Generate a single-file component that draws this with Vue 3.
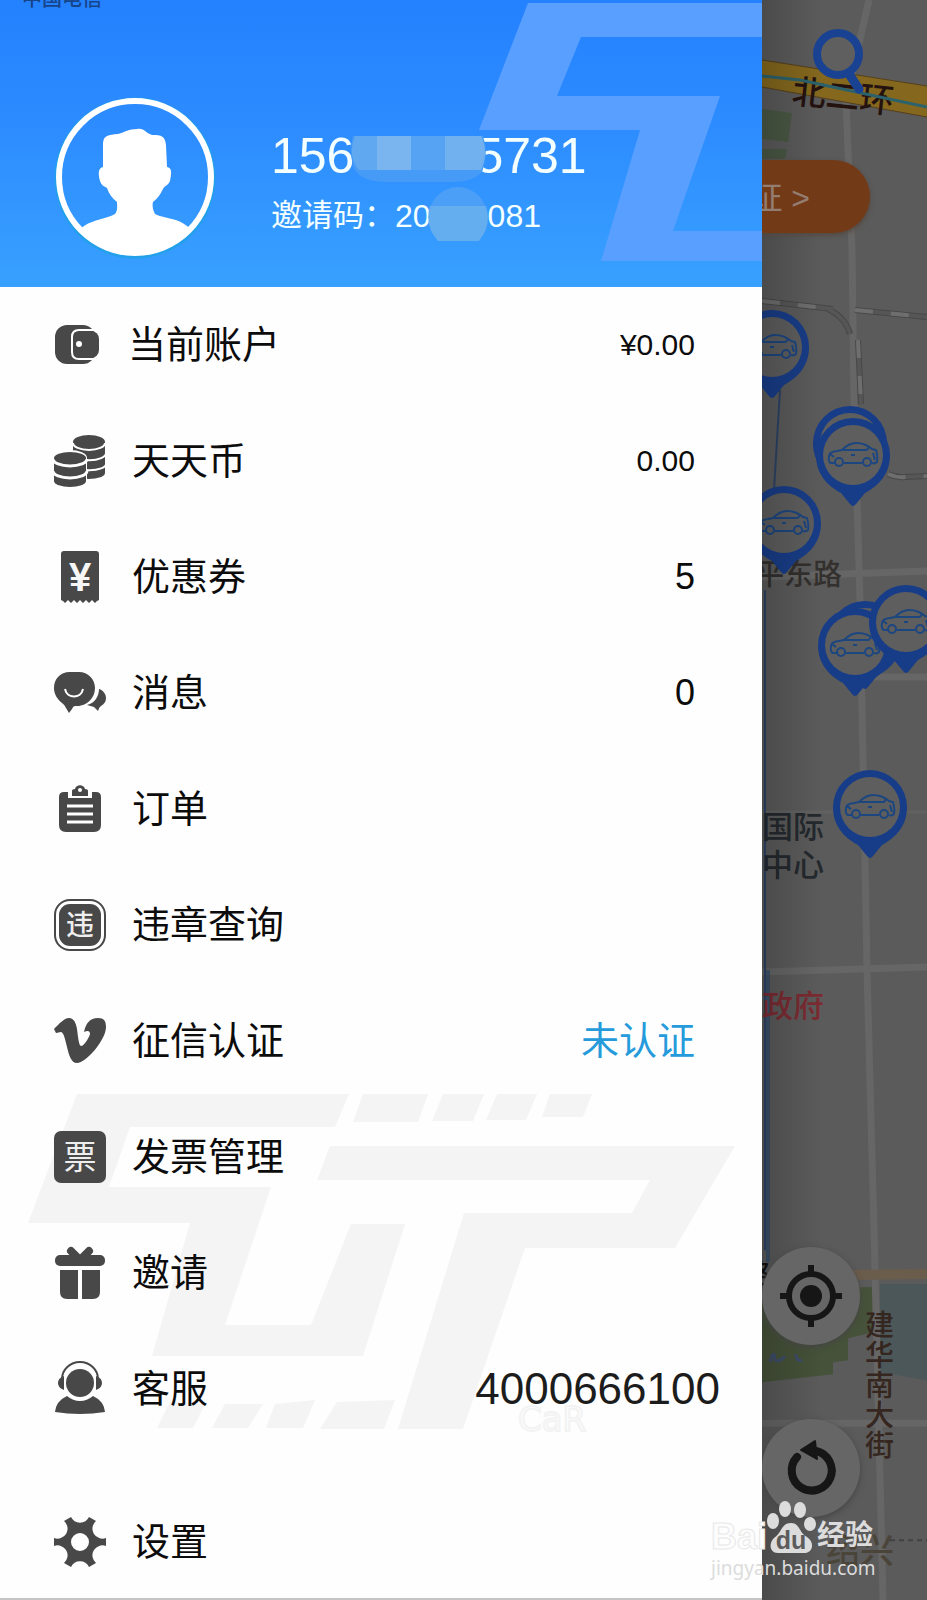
<template>
  <div class="page">
    <aside class="drawer">
      <header class="profile">
        <svg class="profile-bg" viewBox="0 0 762 287" preserveAspectRatio="xMaxYMin slice" aria-hidden="true">
          <polygon points="528,3 762,3 762,37 581,37 557,96 720,96 673,231 762,231 762,261 601,261 640,130 479,130" fill="#589fff" />
        </svg>
        <div class="status-bar"><span>中国电信</span></div>
        <div class="profile-main">
          <svg class="avatar" viewBox="0 0 160 160" aria-label="头像" role="img">
            <defs>
              <clipPath id="avatar-clip"><circle cx="80" cy="80" r="77" /></clipPath>
            </defs>
            <circle cx="80" cy="81" r="79" fill="none" stroke="#22a0ea" stroke-width="3" />
            <circle cx="80" cy="80" r="76" fill="none" stroke="#fff" stroke-width="6" />
            <path clip-path="url(#avatar-clip)" fill="#fff" d="M48 46 C49 38 53 38 63 37 C70 35 74 32 82 32 C90 31 90 36 97 38 C107 38 110 39 111 48 L112 70 C118 71 116 78 115 84 C112 90 110 88 108 92 C105 98 102 102 98 105 C97 109 98 113 100 117 C112 123 128 120 138 136 L150 165 H10 L22 136 C32 122 50 123 60 117 C63 113 62 110 62 105 C57 101 54 97 52 91 C49 89 47 89 45 84 C43 77 43 71 48 70 Z" />
          </svg>
          <div class="profile-info">
            <div class="phone">
              <span>156</span>
              <svg class="phone-mask" viewBox="0 0 136 46" aria-hidden="true">
                <path d="M2 0 H132 Q138 16 131 36 Q122 46 100 46 H36 Q8 46 2 30 Q-2 14 2 0Z" fill="#469bf6" />
                <path d="M4 0 H130 Q138 16 130 34 H8 Q-4 20 4 0Z" fill="#60a9f1" />
                <rect x="26" y="0" width="34" height="34" fill="#7bb5f0" />
                <rect x="60" y="0" width="34" height="34" fill="#57a3f3" />
                <path d="M94 0 H130 Q138 16 130 34 H94Z" fill="#71b1ef" />
              </svg>
              <span>5731</span>
            </div>
            <div class="invite">
              <span class="invite-label">邀请码：</span>
              <span>20</span>
              <svg class="invite-mask" viewBox="0 0 60 54" aria-hidden="true">
                <circle cx="30" cy="29" r="29" fill="#4b9ff6" />
                <path d="M2 19 H58 Q64 38 51 54 H10 Q-4 38 2 19Z" fill="#64adef" />
              </svg>
              <span>081</span>
            </div>
          </div>
        </div>
      </header>

      <nav class="menu">
        <svg class="menu-bg" viewBox="0 0 762 350" aria-hidden="true">
          <g fill="#f4f4f4">
            <polygon points="77,4 349,4 335,37 130,37 109,97 271,97 225,235 311,235 351,134 405,134 363,266 152,266 190,133 28,133" />
            <polygon points="330,56 735,56 675,158 525,158 463,339 398,339 464,123 632,123 650,90 317,90" />
            <polygon points="363,4 428,4 418,32 353,32" />
            <polygon points="443,4 484,4 473,31 432,31" />
            <polygon points="497,4 537,4 526,30 486,30" />
            <polygon points="550,4 592,4 583,27 542,27" />
            <polygon points="170,312 205,314 193,338 157,338" />
            <polygon points="225,314 263,314 248,338 212,338" />
            <polygon points="275,314 315,310 303,338 266,338" />
            <polygon points="337,312 395,310 384,339 320,339" />
          </g>
          <text x="518" y="341" class="logo-text">CaR</text>
        </svg>

        <ul>
          <li v-for="item in items" :key="item.icon" :class="'row-' + item.icon">
            <a href="#" class="row">
              <svg class="row-icon" :viewBox="item.icon === 'wallet' ? '0 0 44 52' : '0 0 52 52'" aria-hidden="true">
                <g v-if="item.icon === 'wallet'">
                  <rect x="-1" y="6" width="40" height="39" rx="12" />
                  <rect x="17" y="12" width="26" height="27" rx="8" />
                  <path d="M38 11 H23 Q16 11 16 18 V33 Q16 40 23 40 H38" fill="none" stroke="#fff" stroke-width="2" />
                  <circle cx="23" cy="25" r="3" fill="#fff" />
                </g>
                <g v-else-if="item.icon === 'coins'">
                  <path d="M19 7 A16 7 0 0 1 51 7 V38 A16 6 0 0 1 19 38Z" />
                  <path d="M19 8 A16 7 0 0 0 51 8 M19 18 A16 7 0 0 0 52 18 M19 29 A16 6 0 0 0 52 29" fill="none" stroke="#fff" stroke-width="2" />
                  <path d="M-1 23 A17 8 0 0 1 33 23 V47 A17 7 0 0 1 -1 47Z" fill="#fff" />
                  <path d="M0 23 A16 6 0 0 1 32 23 V46 A16 6 0 0 1 0 46Z" />
                  <path d="M-1 24 A17 7 0 0 0 33 24 M-1 36 A17 7 0 0 0 33 36" fill="none" stroke="#fff" stroke-width="3" />
                </g>
                <g v-else-if="item.icon === 'coupon'">
                  <path d="M10 0 H42 Q45 0 45 3 V49 L43 50 L41 52 L38 49 L35 52 L32 49 L29 52 L26 49 L23 52 L20 49 L17 52 L14 49 L11 52 L9 50 L7 49 V3 Q7 0 10 0Z" />
                  <text x="26" y="40" class="yen">¥</text>
                </g>
                <g v-else-if="item.icon === 'message'">
                  <path d="M16 5 H25 C34 5 41 12 41 21 C41 31 33 38 25 39 H21 Q19 39 18 42 L15 46 L12 41 Q11 38 8 36 C3 32 0 27 0 21 C0 12 6 5 16 5Z" />
                  <path d="M45 22 C49 23 52 27 52 31 C52 35 50 37 47 39 Q45 40 44 44 L40 40 L33 38 C41 36 45 29 45 22Z" />
                  <path d="M11 22 C13 32 27 32 29 22" fill="none" stroke="#fff" stroke-width="2" />
                </g>
                <g v-else-if="item.icon === 'order'">
                  <path d="M10 9 H14 V15 H38 V9 H42 Q47 9 47 14 V42 Q47 49 40 49 H12 Q5 49 5 42 V14 Q5 9 10 9Z" />
                  <path d="M18 13 V8 Q18 6 21 6 C22 1 30 1 31 6 Q34 6 34 8 V13Z" />
                  <circle cx="26" cy="7" r="2" fill="#fff" />
                  <path d="M13 23 H39 M13 31 H39 M13 39 H39" stroke="#fff" stroke-width="3" />
                </g>
                <g v-else-if="item.icon === 'violation'">
                  <rect x="1" y="1" width="50" height="50" rx="15" fill="none" stroke="#484848" stroke-width="2" />
                  <rect x="5" y="5" width="42" height="42" rx="11" />
                  <text x="26" y="36" class="glyph glyph-sm">违</text>
                </g>
                <g v-else-if="item.icon === 'credit'">
                  <path d="M0 14 C5 9 10 3 15 3 C20 3 22 8 23 14 C24 22 25 31 27 31 C30 31 35 23 36 19 C36 16 34 15 30 17 C32 8 36 3 44 3 C50 3 52 6 52 12 C52 25 32 48 23 48 C17 48 15 40 13 32 C11 24 10 18 7 17 C5 17 4 18 2 18Z" />
                </g>
                <g v-else-if="item.icon === 'invoice'">
                  <rect x="0" y="0" width="52" height="52" rx="7" />
                  <text x="26" y="38" class="glyph">票</text>
                </g>
                <g v-else-if="item.icon === 'gift'">
                  <rect x="1" y="8" width="50" height="11" rx="5" />
                  <path d="M17 4 L26 13 L35 4" fill="none" stroke="#484848" stroke-width="8" stroke-linecap="round" stroke-linejoin="round" />
                  <path d="M6 23 H24 V52 H13 Q6 52 6 45Z M28 23 H46 V45 Q46 52 39 52 H28Z" />
                </g>
                <g v-else-if="item.icon === 'service'">
                  <path d="M8 16 A18 17 0 0 1 44 16" fill="none" stroke="#484848" stroke-width="2" />
                  <path d="M10 13 V27 Q4 25 4 20 Q4 15 10 13Z M42 13 V27 Q48 25 48 20 Q48 15 42 13Z" />
                  <circle cx="26" cy="20" r="14" />
                  <path d="M13 33 Q19 38 26 38 Q33 38 39 33 Q50 38 51 49 Q26 53 1 49 Q2 38 13 33Z" />
                </g>
                <g v-else transform="translate(26 26)">
                  <path fill-rule="evenodd" d="M26 -4 V4 A10 10 0 0 0 16 21 L9 25 A10 10 0 0 0 -9 25 L-16 21 A10 10 0 0 0 -26 4 V-4 A10 10 0 0 0 -16 -21 L-9 -25 A10 10 0 0 0 9 -25 L16 -21 A10 10 0 0 0 26 -4Z M9 0 A9 9 0 1 0 -9 0 A9 9 0 1 0 9 0Z" />
                </g>
              </svg>
              <span class="row-label">{{ item.label }}</span>
              <span v-if="item.value" class="row-value" :class="item.kind">{{ item.value }}</span>
            </a>
          </li>
        </ul>
      </nav>
    </aside>

    <main class="map">
      <svg class="map-canvas" viewBox="762 0 165 1600" preserveAspectRatio="xMinYMin slice" aria-hidden="true">
        <defs>
          <linearGradient id="edge" x1="0" x2="1" y1="0" y2="0">
            <stop offset="0" stop-color="#000" stop-opacity="0.18" />
            <stop offset="1" stop-color="#000" stop-opacity="0" />
          </linearGradient>
          <g id="pin">
            <path d="M-37 0 A37 37 0 1 1 37 0 C37 18 27 30 12 38 L3 49 Q0 53 -3 49 L-12 38 C-27 30 -37 18 -37 0Z" fill="#183d88" />
            <circle r="30" fill="#5e5e5e" />
          </g>
          <g id="car" fill="none" stroke="#1c4680" stroke-width="2">
            <path d="M-18 8 H-22 Q-25 7 -24 1 Q-24 -3 -16 -4 L-11 -5 Q-4 -12 3 -12 Q12 -12 19 -6 L23 -5 Q25 2 24 7 Q22 9 19 8 M9 8 H-9" />
            <path d="M-10 -5 H13 Q16 -6 15 -8 M-2 0 H2 M-23 -1 L-19 2 M20 -2 L22 5" />
            <circle cx="-14" cy="7" r="4" />
            <circle cx="14" cy="7" r="4" />
          </g>
        </defs>
        <rect x="762" width="165" height="1600" fill="#5b5b5b" />

        <!-- parks and water -->
        <path d="M762 109 L792 113 L788 142 L762 139Z M762 149 H787 L785 159 H762Z" fill="#4a5844" />
        <path d="M762 1290 L873 1287 V1332 L848 1338 V1360 L833 1362 V1374 L762 1382Z" fill="#465239" />
        <path d="M880 1284 H927 V1380 L880 1372Z" fill="#4c5759" />

        <!-- roads -->
        <g fill="none" stroke="#666" stroke-width="7">
          <path d="M869 0 L846 100 L852 250 L854 400 L860 600 L867 970 L874 1230 L883 1600" />
          <path d="M762 577 L927 571 M864 677 H927 M762 972 L927 967 M762 1423 H927" />
          <path d="M762 812 H927" stroke-width="3" stroke="#616161" />
        </g>
        <path d="M850 1275 L927 1274" stroke="#6b5d4b" stroke-width="10" />
        <path d="M780 390 L774 490 M765 590 V1250" stroke="#2c4265" stroke-width="2" fill="none" />
        <path d="M768 970 V1262" stroke="#264a70" stroke-width="4" fill="none" opacity="0.6" />

        <!-- railway -->
        <g fill="none">
          <path d="M762 301 L833 309 M855 310 L927 317 M828 309 Q846 318 850 334 M858 340 L861 404 M888 474 Q897 478 905 477 L927 476" stroke="#484848" stroke-width="6" />
          <path d="M762 301 L833 309 M855 310 L927 317 M828 309 Q846 318 850 334 M858 340 L861 404 M888 474 Q897 478 905 477 L927 476" stroke="#565656" stroke-width="4" />
          <path d="M762 301 L833 309 M855 310 L927 317 M858 340 L861 404 M888 474 Q897 478 905 477 L927 476" stroke="#6e6e6e" stroke-width="4" stroke-dasharray="18 18" />
        </g>
        <path d="M890 1540 H927" stroke="#424242" stroke-width="2" stroke-dasharray="5 4" />

        <path d="M762 60 L927 86 V117 L762 87Z" fill="#85681e" />
        <path d="M762 60 L927 86 M762 87 L927 117" stroke="#57401c" />

        <!-- labels -->
        <g class="map-label">
          <text x="791" y="103" font-size="34" fill="#24120f" transform="rotate(6 791 103)">北二环</text>
          <text x="755" y="585" font-size="29" fill="#33302e">平东路</text>
          <text x="762" y="838" font-size="31" fill="#24292e">国际</text>
          <text x="762" y="876" font-size="31" fill="#24292e">中心</text>
          <text x="762" y="1017" font-size="31" fill="#7b2b32">政府</text>
          <text x="744" y="1284" font-size="27" fill="#111">路</text>
          <text v-for="(ch, i) in '建华南大街'" :key="ch" x="865" :y="1336 + i * 30" font-size="29" fill="#35261f">{{ ch }}</text>
          <text x="826" y="1563" font-size="34" fill="#4a4439">绍兴</text>
        </g>
        <path d="M762 76 L800 80 L927 107" stroke="#2c626c" stroke-width="3" fill="none" />
        <path d="M770 1362 q4 -14 5 -3 q2 5 10 -3 M796 1354 q0 8 6 6" stroke="#3e4d6a" stroke-width="3" fill="none" />

        <!-- car pins -->
        <g v-for="(pin, i) in pins" :key="i" :transform="`translate(${pin.x} ${pin.y})`">
          <use href="#pin" />
          <use v-if="pin.car" href="#car" />
        </g>
        <rect x="762" width="60" height="1600" fill="url(#edge)" />
      </svg>

      <button class="search" type="button" aria-label="搜索">
        <svg viewBox="0 0 56 70">
          <path d="M35 44 L47 62" stroke="#1a4292" stroke-width="9" stroke-linecap="round" />
          <circle cx="26" cy="27" r="21" fill="#5f5f5f" stroke="#1a4292" stroke-width="8" />
        </svg>
      </button>
      <a href="#" class="verify">证 &gt;</a>
      <button class="round locate" type="button" aria-label="定位">
        <svg viewBox="0 0 98 98">
          <circle cx="49" cy="49" r="22" fill="none" stroke="#161616" stroke-width="6" />
          <circle cx="49" cy="49" r="11" fill="#161616" />
          <path d="M49 18 V28 M49 70 V80 M18 49 H28 M70 49 H80" stroke="#161616" stroke-width="6" />
        </svg>
      </button>
      <button class="round refresh" type="button" aria-label="刷新">
        <svg viewBox="0 0 98 98">
          <path d="M35 38 A20 20 0 1 0 54 32" fill="none" stroke="#161616" stroke-width="8" stroke-linecap="round" />
          <path d="M39 31 L53 22 L55 40Z" fill="#161616" stroke="#161616" stroke-width="2" stroke-linejoin="round" />
        </svg>
      </button>
    </main>

    <div class="watermark">
      <div class="wm-brand">
        <span class="wm-bai">Bai</span>
        <svg viewBox="0 0 50 54" aria-hidden="true">
          <g fill="#dcdcdc">
            <ellipse cx="6" cy="20" rx="6" ry="8" />
            <ellipse cx="18" cy="8" rx="6" ry="8" />
            <ellipse cx="33" cy="9" rx="6" ry="8" />
            <ellipse cx="43" cy="23" rx="6" ry="7" />
            <path d="M24 22 C33 22 32 32 40 36 C49 42 45 53 36 52 H12 C3 53 1 43 7 37 C15 32 14 22 24 22Z" />
          </g>
          <text x="24" y="48" class="wm-du">du</text>
        </svg>
        <span class="wm-cn">经验</span>
      </div>
      <div class="wm-url">jingyan.baidu.com</div>
    </div>
  </div>
</template>

<script setup>
const items = [
  { icon: 'wallet', label: '当前账户', value: '¥0.00', kind: 'money' },
  { icon: 'coins', label: '天天币', value: '0.00', kind: 'money' },
  { icon: 'coupon', label: '优惠券', value: '5', kind: 'count' },
  { icon: 'message', label: '消息', value: '0', kind: 'count' },
  { icon: 'order', label: '订单' },
  { icon: 'violation', label: '违章查询' },
  { icon: 'credit', label: '征信认证', value: '未认证', kind: 'status' },
  { icon: 'invoice', label: '发票管理' },
  { icon: 'gift', label: '邀请' },
  { icon: 'service', label: '客服', value: '4000666100', kind: 'hotline' },
  { icon: 'settings', label: '设置' },
]

// later pins are painted over earlier ones
const pins = [
  { x: 772, y: 347, car: true },
  { x: 850, y: 443 },
  { x: 853, y: 455, car: true },
  { x: 784, y: 523, car: true },
  { x: 865, y: 638 },
  { x: 855, y: 645, car: true },
  { x: 906, y: 622, car: true },
  { x: 870, y: 807, car: true },
]
</script>

<style>
body { margin: 0; background: #5b5b5b; }
</style>

<style scoped>
.page { position: relative; display: flex; min-height: 100vh; overflow: hidden; font-family: "Liberation Sans", "Noto Sans CJK SC", sans-serif; color: #0c0c0c; }
.drawer { flex: 0 0 82.2%; display: flex; flex-direction: column; box-sizing: border-box; background: #fefefe; border-bottom: 2px solid #c4c4c4; }

.profile { position: relative; height: 287px; overflow: hidden; background: linear-gradient(#2481ff, #2d8cff 45%, #38a1ff); color: #f4ffff; }
.profile-bg { position: absolute; inset: 0; width: 100%; height: 100%; }
.status-bar { position: relative; display: flex; align-items: flex-end; height: 10px; padding-left: 22px; overflow: hidden; font-size: 20px; font-weight: 500; line-height: 22px; color: #164488; }
.profile-main { position: relative; display: flex; align-items: center; gap: 56px; padding: 87px 24px 0 55px; }
.avatar { flex: none; width: 160px; height: 160px; overflow: visible; }
.profile-info { padding-top: 18px; }
.phone, .invite { display: flex; align-items: center; height: 60px; line-height: 60px; white-space: nowrap; }
.phone { font-size: 50px; }
.phone-mask { position: relative; width: 136px; height: 46px; margin: 6px -12px 0 -3px; }
.invite { font-size: 32px; }
.invite-label { width: 124px; font-size: 31px; line-height: 60px; }
.invite-mask { position: relative; width: 60px; height: 54px; margin: 0 0 4px -3px; }

.menu { position: relative; flex: 1; }
.menu-bg { position: absolute; top: 803px; left: 0; width: 100%; }
.logo-text { font-family: "DejaVu Sans", sans-serif; font-size: 34px; fill: #fefefe; stroke: #f3f3f3; stroke-width: 2px; }
ul { position: relative; margin: 0; padding: 0; list-style: none; }
.row { display: flex; align-items: center; gap: 26px; height: 116px; padding: 0 67px 0 54px; color: inherit; text-decoration: none; }
.row-settings { margin-top: 39px; }
.row-settings .row { height: 112px; }
.row-icon { flex: none; width: 52px; height: 52px; overflow: visible; fill: #484848; }
.row-wallet .row-icon { width: 48px; }
.row-label { flex: 1; font-size: 38px; line-height: 56px; }
.row-value { white-space: nowrap; }
.money { font-size: 30px; }
.count { font-size: 36px; }
.status { font-size: 38px; line-height: 56px; color: #259bdc; }
.hotline { font-size: 44px; color: #1c1c1c; }
.row-service .row { padding-right: 42px; }
.yen { font-family: "Liberation Sans", sans-serif; font-size: 40px; font-weight: bold; text-anchor: middle; fill: #f6f6f6; }
.glyph { font-family: "Noto Sans CJK SC", sans-serif; font-size: 33px; text-anchor: middle; fill: #eee; }
.glyph-sm { font-size: 28px; font-weight: 500; }

.map { position: relative; flex: 1; min-width: 0; overflow: hidden; background: #5b5b5b; }
.map-canvas { position: absolute; inset: 0; width: 100%; height: 100%; }
.map-label { font-family: "Noto Sans CJK SC", sans-serif; font-weight: 500; }
button { padding: 0; border: 0; background: none; }
button svg { display: block; width: 100%; }
.search { position: absolute; top: 27px; left: 50px; width: 56px; height: 70px; }
.verify { position: absolute; top: 160px; left: -60px; width: 168px; height: 73px; padding-right: 60px; box-sizing: border-box; border-radius: 37px; background: #733a18; box-shadow: 0 2px 5px #54463d; color: #937d70; font-size: 32px; line-height: 76px; text-align: right; text-decoration: none; white-space: nowrap; }
.round { position: absolute; left: 0; width: 98px; height: 98px; border-radius: 50%; background: #666; box-shadow: 0 2px 6px #444; }
.locate { top: 1247px; }
.refresh { top: 1419px; }

.watermark { position: absolute; right: 50px; bottom: 19px; width: 166px; color: #dcdcdc; }
.wm-brand { display: flex; align-items: flex-end; height: 54px; white-space: nowrap; }
.wm-brand svg { flex: none; width: 50px; height: 54px; }
.wm-bai { color: #fdfdfd; font-size: 36px; font-weight: bold; line-height: 36px; -webkit-text-stroke: 1px #e8e8e8; }
.wm-cn { font-size: 28px; font-weight: bold; line-height: 38px; }
.wm-du { font-family: "Liberation Sans", sans-serif; font-size: 25px; font-weight: bold; text-anchor: middle; fill: #5c5c5c; }
.wm-url { font-family: "Noto Sans", sans-serif; font-size: 19px; line-height: 26px; white-space: nowrap; }
</style>
